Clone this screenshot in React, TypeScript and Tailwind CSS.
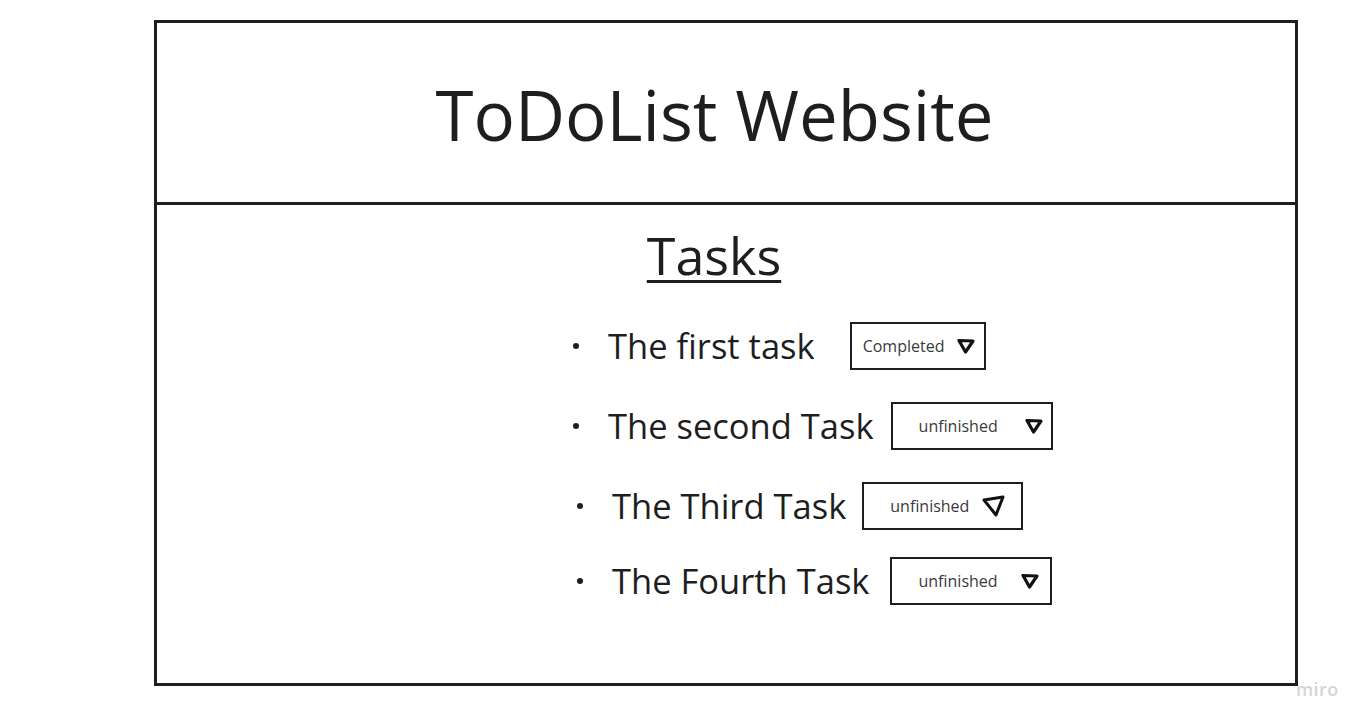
import React from 'react';

type Task = {
  label: string;
  status: string;
  bulletMl: string;
  gap: string;
  boxW: string;
  textPl: string;
  iconGap: string;
  tilted?: boolean;
};

const tasks: Task[] = [
  { label: 'The first task', status: 'Completed', bulletMl: 'ml-[416px]', gap: 'ml-[35px]', boxW: 'w-[136px]', textPl: 'pl-[11px]', iconGap: 'ml-[13px]' },
  { label: 'The second Task', status: 'unfinished', bulletMl: 'ml-[416px]', gap: 'ml-[17px]', boxW: 'w-[162px]', textPl: 'pl-[26px]', iconGap: 'ml-[27px]' },
  { label: 'The Third Task', status: 'unfinished', bulletMl: 'ml-[420px]', gap: 'ml-[16px]', boxW: 'w-[161px]', textPl: 'pl-[26px]', iconGap: 'ml-[13px]', tilted: true },
  { label: 'The Fourth Task', status: 'unfinished', bulletMl: 'ml-[420px]', gap: 'ml-[21px]', boxW: 'w-[162px]', textPl: 'pl-[26px]', iconGap: 'ml-[23px]' },
];

const Arrow: React.FC<{ tilted?: boolean }> = ({ tilted }) =>
  tilted ? (
    <svg width="24" height="24" viewBox="0 0 24 24" fill="none">
      <path d="M2 6 L21 3 L14 21 Z" stroke="#111" strokeWidth="3" strokeLinejoin="round" />
    </svg>
  ) : (
    <svg width="18" height="16" viewBox="0 0 18 16" fill="none">
      <path d="M2 2.5 L16 3 L8.5 14 Z" stroke="#111" strokeWidth="3.2" strokeLinejoin="round" />
    </svg>
  );

const App: React.FC = () => {
  return (
    <div className="relative w-[1371px] h-[728px] bg-white font-['Open_Sans',sans-serif] text-[#1e1e1e]">
      <div className="pt-[20px] pl-[154px]">
        <div className="w-[1144px] h-[666px] border-[3px] border-[#1e1e1e] flex flex-col">
          {/* Header */}
          <div className="h-[182px] flex items-center justify-center border-b-[3px] border-[#1e1e1e]">
            <h1 className="text-[69px] leading-none mt-[4px] -ml-[23px]">ToDoList Website</h1>
          </div>

          {/* Tasks */}
          <div className="flex flex-col">
            <h2 className="text-[52px] leading-none text-center underline decoration-[3px] underline-offset-[5px] mt-[24px] -ml-[24px]">
              Tasks
            </h2>
            <ul className="flex flex-col mt-[41px] gap-[32px]">
              {tasks.map((t, i) => (
                <li key={i} className={`flex items-center h-[48px] ${i === 3 ? '-mt-[5px]' : ''}`}>
                  <span className={`${t.bulletMl} w-[6px] h-[6px] rounded-full bg-[#1e1e1e]`} />
                  <span className="ml-[29px] text-[34.5px] leading-none">{t.label}</span>
                  <div className={`${t.gap} ${t.boxW} h-[48px] border-2 border-[#1e1e1e] flex items-center ${t.textPl}`}>
                    <span className="text-[16px] text-[#3a3a3a]">{t.status}</span>
                    <span className={t.iconGap}>
                      <Arrow tilted={t.tilted} />
                    </span>
                  </div>
                </li>
              ))}
            </ul>
          </div>
        </div>
      </div>
      <div className="absolute left-[1296px] top-[676px] text-[18px] font-semibold text-[#d4d4dc] tracking-wide">
        miro
      </div>
    </div>
  );
};

export default App;
